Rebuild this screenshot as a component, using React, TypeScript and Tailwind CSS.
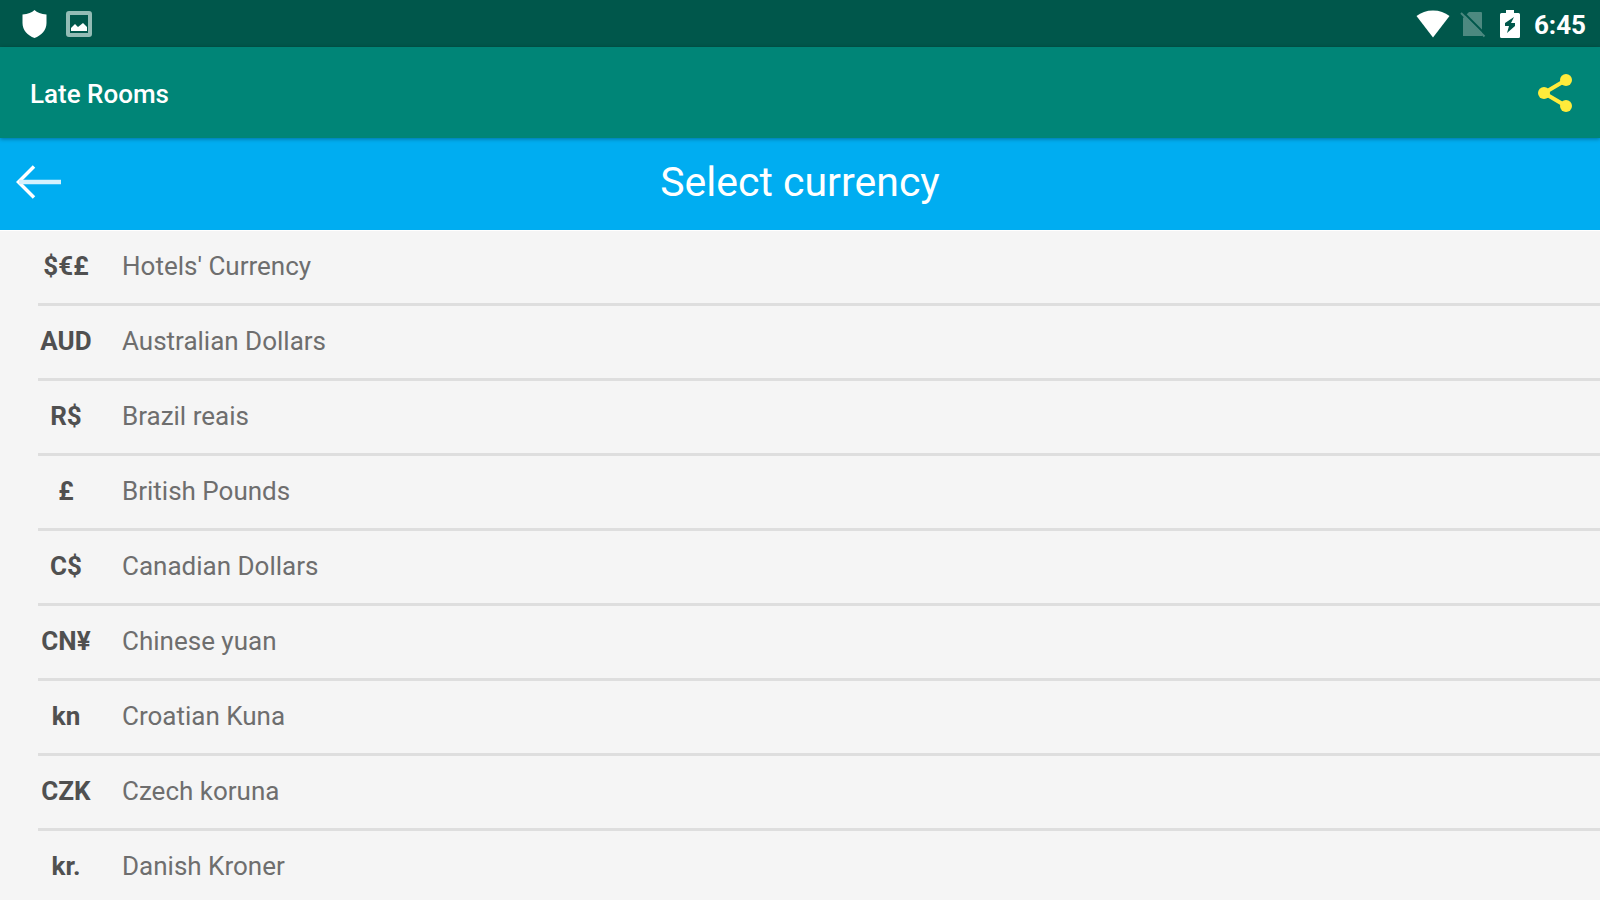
const CURRENCIES = [
  { code: '$€£', name: "Hotels' Currency" },
  { code: 'AUD', name: 'Australian Dollars' },
  { code: 'R$', name: 'Brazil reais' },
  { code: '£', name: 'British Pounds' },
  { code: 'C$', name: 'Canadian Dollars' },
  { code: 'CN¥', name: 'Chinese yuan' },
  { code: 'kn', name: 'Croatian Kuna' },
  { code: 'CZK', name: 'Czech koruna' },
  { code: 'kr.', name: 'Danish Kroner' },
]

function StatusBar() {
  return (
    <div className="flex h-[47px] shrink-0 items-center justify-between bg-[#00574b] pr-[14px] pl-[21px] text-white">
      <div className="flex items-center gap-[18px]">
        <svg width="27" height="30" viewBox="0 0 27 30" fill="currentColor" aria-hidden="true">
          <path d="M13.5 1 C16 3.5 20 5 25.5 5.5 V14 C25.5 21 20.5 26.5 13.5 29 C6.5 26.5 1.5 21 1.5 14 V5.5 C7 5 11 3.5 13.5 1 Z" />
        </svg>
        <svg width="26" height="26" viewBox="0 0 26 26" aria-hidden="true">
          <rect x="2" y="2" width="22" height="22" rx="1" fill="none" stroke="#93bcb5" strokeWidth="4" />
          <path d="M5 20 V17 L9 13 L12 16 L17 12 L21 16 V20 Z" fill="currentColor" />
        </svg>
      </div>
      <div className="flex items-center">
        <svg width="34" height="28" viewBox="0 0 34 28" fill="currentColor" aria-hidden="true">
          <path d="M17 27.5 L0.5 6 C5 2.5 10.5 0.5 17 0.5 C23.5 0.5 29 2.5 33.5 6 Z" />
        </svg>
        <svg width="26" height="28" viewBox="0 0 26 28" className="ml-[10px]" aria-hidden="true">
          <path d="M9 2 H21 Q22 2 22 3 V26 H3 V8 Z" fill="#4d8980" />
          <path d="M2 1 L25 24" stroke="#00574b" strokeWidth="2" />
          <path d="M1 3 L24.5 26.5" stroke="#4d8980" strokeWidth="2" />
        </svg>
        <svg width="20" height="28" viewBox="0 0 20 28" className="ml-[14px]" aria-hidden="true">
          <path d="M6 0 H14 V3 H18.5 Q20 3 20 4.5 V26.5 Q20 28 18.5 28 H1.5 Q0 28 0 26.5 V4.5 Q0 3 1.5 3 H6 Z" fill="currentColor" />
          <path d="M14 7 L5 13 V16 H9 L7 23 L15 16 V13 H11 Z" fill="#00574b" />
        </svg>
        <time className="ml-[14px] pt-[2px] text-[26px] leading-8 font-bold">6:45</time>
      </div>
    </div>
  )
}

function AppBar() {
  return (
    <header className="relative z-10 flex h-[91px] shrink-0 items-center justify-between bg-[#008577] pr-[27px] pl-[30px] shadow-[0_1px_4px_rgba(0,0,0,0.35)]">
      <h1 className="pt-[3px] text-[26px] leading-8 font-medium text-white">Late Rooms</h1>
      <button type="button" aria-label="Share">
        <svg width="36" height="40" viewBox="0 0 36 40" aria-hidden="true">
          <path d="M29 7 L7 20 L29 33" fill="none" stroke="#ffeb3b" strokeWidth="4" />
          <g fill="#ffeb3b">
            <circle cx="29" cy="7" r="6" />
            <circle cx="7" cy="20" r="6" />
            <circle cx="29" cy="33" r="6" />
          </g>
        </svg>
      </button>
    </header>
  )
}

function TitleBar() {
  return (
    <div className="grid h-[92px] shrink-0 grid-cols-[1fr_auto_1fr] items-center bg-[#00adf1] px-4 pb-[5px] text-white">
      <button type="button" aria-label="Back" className="justify-self-start">
        <svg width="46" height="36" viewBox="0 0 46 36" fill="none" stroke="currentColor" aria-hidden="true">
          <path d="M18 2.5 L2.5 18 L18 33.5" strokeWidth="3.5" />
          <path d="M3 18 H45" stroke="#d5f1fd" strokeWidth="4.5" />
        </svg>
      </button>
      <h2 className="text-[41px] leading-[48px]">Select currency</h2>
    </div>
  )
}

export default function App() {
  return (
    <div className="flex h-screen flex-col bg-[#f5f5f5] font-[Roboto,'Noto_Sans',sans-serif]">
      <StatusBar />
      <AppBar />
      <TitleBar />
      <ul className="min-h-0 flex-1 overflow-y-auto border-t border-white pl-[38px] [scrollbar-width:none]">
        {CURRENCIES.map(({ code, name }) => (
          <li key={name} className="border-b-3 border-[#dedede]">
            <button type="button" className="flex h-[72px] w-full items-center pb-[2px] text-left text-[26px] leading-8">
              <span className="w-14 text-center font-bold text-[#505050]">{code}</span>
              <span className="ml-7 text-[#6e6e6e]">{name}</span>
            </button>
          </li>
        ))}
      </ul>
    </div>
  )
}
